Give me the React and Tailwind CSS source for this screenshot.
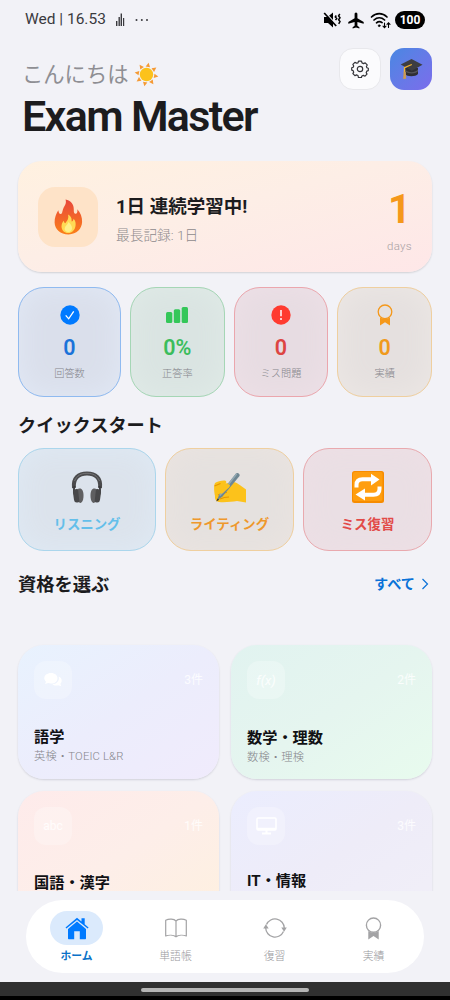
/* ---------- status bar icons ---------- */

function MutedIcon() {
  return (
    <svg width="19" height="18" viewBox="0 0 19 18" fill="none">
      <path d="M1 6h3.5L10 1.5v15L5 12H1z" fill="#000" />
      <path d="M2.200 1.200l12 13.500" stroke="#f2f2f7" strokeWidth="1.300" />
      <path d="M1.2 2l12 13" stroke="#000" strokeWidth="1.7" />
      <path d="M13.300 4.500l-1 1.500 1.400 1.500-1.200 1.500M16.800 3l-1.200 1.900 1.400 1.900-1.400 1.900 1.400 1.900-1.300 2.200" stroke="#000" strokeWidth="1.5" />
    </svg>
  );
}

function PlaneIcon() {
  return (
    <svg width="16" height="17" viewBox="0 0 16 17" fill="#000">
      <path d="M8 .5c.9 0 1.400.8 1.400 1.800v4L15.700 10v1.800L9.400 10v3.800l2 1.400v1.300L8 15.600l-3.400.9v-1.300l2-1.400V10L.3 11.800V10l6.300-3.700v-4C6.600 1.300 7.100.5 8 .5z" />
    </svg>
  );
}

function WifiIcon() {
  return (
    <svg width="21" height="17" viewBox="0 0 21 17" fill="none" stroke="#000" strokeLinecap="round">
      <path d="M1.500 5C6 .6 12.500.6 17 5M4 8c3.200-3 7.400-3 10.600 0M6.500 10.800c1.700-1.500 3.900-1.500 5.600-.2" strokeWidth="1.700" />
      <circle cx="9.200" cy="13.700" r="1" fill="#000" strokeWidth=".5" />
      <path d="M14.500 11v4.500M13 14.200l1.500 1.500 1.500-1.500M18.500 15.500V11M17 12.300l1.500-1.500 1.500 1.500" strokeWidth="1.100" />
    </svg>
  );
}

/* ---------- emoji style drawings ---------- */

function Sun() {
  const rays = [10, 55, 100, 145, 190, 235, 280, 325];
  return (
    <svg width="25" height="25" viewBox="0 0 26 26">
      {rays.map((r) => (
        <path key={r} d="M13 .5l2.300 4.500h-4.600z" fill="#f59a35" transform={`rotate(${r} 13 13)`} />
      ))}
      <circle cx="13" cy="13" r="7" fill="#fcc21b" />
    </svg>
  );
}

function GradCap() {
  return (
    <svg width="23" height="22" viewBox="0 0 23 22">
      <path d="M5.200 10v6c1.500 3 10.500 3 12.800 0v-6z" fill="#2f2f33" />
      <path d="M5.200 11.500c3 3.500 9.500 3.500 12.800 0v1.800c-3 3-9.800 3-12.800 0z" fill="#55555a" />
      <path d="M.7 6.500L11.500 1l11 5.800-10.700 6z" fill="#3d3d41" />
      <path d="M11.800 6.500L4.500 9.700v5" fill="none" stroke="#f5b52d" strokeWidth="1.300" />
      <path d="M3.600 13.800h2.200l.4 7-3 .3z" fill="#c99a55" />
    </svg>
  );
}

function Flame() {
  return (
    <svg width="29" height="36" viewBox="0 0 29 36">
      <defs>
        <linearGradient id="flame" x1="0" y1="0" x2="0" y2="1">
          <stop offset="0" stopColor="#e8473c" />
          <stop offset="1" stopColor="#fb8019" />
        </linearGradient>
      </defs>
      <path d="M11.500.5c5.500 1 8.500 5 8.300 10.300-.1 2.300.3 3.700 1.300 4 1.800.5 2.700-1.800 2.200-4.600 3.200 3.300 5 7.800 4.800 12.800-.3 7-5.500 12.200-13.400 12.400C6.500 35.500.8 30.500.6 23.500.4 18.500 2.400 14.500 4.300 11.300c.4 2.200.9 3.600 2.300 3.700 1.800 0 1.500-2.500 2.700-5.500C10.800 6.300 12.800 4.300 11.500.5z" fill="url(#flame)" />
      <path d="M14 15.500c3.500 2 3.800 4.300 3.600 7 1.200-.3 1.800-1.300 1.900-2.800 2 2 2.500 4.500 2 7.300-.7 4.300-3.500 7-7.200 7-4 0-6.700-2.700-6.800-6.500 0-2.700 1.200-4.500 2.300-5.800.3 1.500.7 2.300 1.500 2.500 1.500-2 3.900-4.500 2.700-8.700z" fill="#ffda55" />
      <path d="M14.500 23c2 2 3.700 4 3.500 6.500-.2 2-1.500 3.500-3.700 3.500s-3.700-1.500-3.600-3.500c.2-2.500 2.800-3.500 3.800-6.500z" fill="#fff08a" />
    </svg>
  );
}

function Headphones() {
  return (
    <svg width="32" height="32" viewBox="0 0 32 32">
      <path d="M3 17C1.800 7 7.500 2.500 16 2.500S30.200 7 29 17" fill="none" stroke="#4b4b4d" strokeWidth="4" />
      <path d="M3.500 10C6 4.500 10 2.300 16 2.300S26 4.500 28.500 10" fill="none" stroke="#747476" strokeWidth="1" />
      <path d="M3.500 15c-1 3-.9 6 .8 10M28.500 15c1 3 .9 6-.8 10" fill="none" stroke="#39393b" strokeWidth="1.800" />
      <rect x="2.500" y="18" width="7" height="13.500" rx="3" fill="#48484a" transform="rotate(-8 6 25)" />
      <rect x="22.500" y="18" width="7" height="13.500" rx="3" fill="#48484a" transform="rotate(8 26 25)" />
      <path d="M7 18c3-1.500 5.500.5 5.500 6.500S10.500 32 8.500 32z" fill="#5f5f61" />
      <path d="M25 18c-3-1.500-5.500.5-5.500 6.500s2 7.500 4 7.500z" fill="#5f5f61" />
    </svg>
  );
}

function WritingHand() {
  return (
    <svg width="34" height="32" viewBox="0 0 34 32">
      <path d="M2 12c2-1.500 6-2.500 9-2.500 2.500 0 3 2 1.500 3l8-1.500c3.500.500 7 3.500 12.500 7.500v13l-9-1.500c-5 .8-12 1.500-18 1-3-.3-4.300-3-4-6-.8-4-1.500-10 0-13z" fill="#fcc21b" />
      <path d="M1.500 15l6-2.500M5 24c3-1.500 6-2.500 9-2.500M7 28c3-1.500 6-2 9-2" fill="none" stroke="#e59600" strokeWidth="1.200" />
      <path d="M4 29.500L6 24 23 2.500c1.500-1.500 4.500.5 3.500 2.500L9.500 25.500z" fill="#6f8792" />
      <path d="M6 24L23 2.500l1.300.8L7.500 25z" fill="#93a9b3" />
      <path d="M3.200 30.500l1.300-3 1.800 1.200z" fill="#333" />
      <path d="M13 13.500c4-1 5 1 3 3l-6 5.500c-2 1.500-4 .5-3-1.500" fill="#fcc21b" />
    </svg>
  );
}

function RepeatTile() {
  return (
    <svg width="32" height="32" viewBox="0 0 32 32">
      <rect width="32" height="32" rx="2.500" fill="#f78c00" />
      <rect x="1" y="1" width="29.500" height="29" rx="2" fill="#ff9e0f" />
      <path d="M4.500 16.500V14c0-4 2.500-5.700 6-5.700h9" fill="none" stroke="#fff" strokeWidth="4" />
      <path d="M27.500 15.500V18c0 4-2.500 5.700-6 5.700h-9" fill="none" stroke="#fff" strokeWidth="4" />
      <path d="M19 2.800l8.500 5.700-8.500 6zM13 17.500v12l-9.500-6z" fill="#fff" />
    </svg>
  );
}

/* ---------- app icons ---------- */

function Gear() {
  return (
    <svg width="18" height="18" viewBox="0 0 18 18" fill="none" stroke="#333338" strokeWidth="1.200" strokeLinejoin="round">
      <path d="M7.500 1.200h3l.5 1.700 1.600.7 1.600-.8 2 2.100-.8 1.600.5 1.200 1.400.5v2.400l-1.500.5-.6 1.500.8 1.500-2 2.100-1.600-.8-1.500.6-.5 1.500h-3L7 15.500l-1.600-.6-1.500.8-2-2.100.8-1.500-.6-1.500-1.400-.5V7.700l1.500-.5.5-1.200-.8-1.600 2-2.100 1.600.8L7 2.900z" />
      <circle cx="9" cy="9" r="2.700" />
    </svg>
  );
}

function CheckBadge() {
  return (
    <svg width="20" height="20" viewBox="0 0 20 20">
      <circle cx="10" cy="10" r="9.700" fill="#007aff" />
      <path d="M5.700 10.300l3 3.500 5-7.500" fill="none" stroke="#fff" strokeWidth="1.300" />
    </svg>
  );
}

function Bars() {
  return (
    <svg width="24" height="20" viewBox="0 0 24 20" fill="#34c759">
      <rect x="1" y="7" width="6.300" height="11" rx="1.500" />
      <rect x="8.800" y="4.200" width="6.400" height="13.800" rx="1.500" />
      <rect x="16.700" y="2" width="6.300" height="16" rx="1.500" />
    </svg>
  );
}

function AlertBadge() {
  return (
    <svg width="20" height="20" viewBox="0 0 20 20">
      <circle cx="10" cy="10" r="9.700" fill="#ff3b30" />
      <path d="M10 5v6.300" stroke="#fff" strokeWidth="1.500" />
      <circle cx="10" cy="14" r="1" fill="#fff" />
    </svg>
  );
}

function Rosette({ className, width = 16, height = 22 }) {
  return (
    <svg className={className} width={width} height={height} viewBox="0 0 16 22" fill="none" stroke="currentColor">
      <circle cx="8" cy="7.800" r="6.800" strokeWidth="1.300" />
      <path d="M3 13.300V21.500l5-3.300 5 3.300v-8.200c-3 2.200-7 2.200-10 0z" fill="currentColor" stroke="none" />
    </svg>
  );
}

function HomeIcon() {
  return (
    <svg width="24" height="23" viewBox="0 0 24 23" fill="#007aff">
      <path d="M.5 10.600L12 .8l4.500 3.800V1.200h3.200v6.100l3.900 3.300-.9 1L12 2.900 1.400 11.600z" />
      <path d="M3 12l9-7.500L21 12v9.300c0 .6-.4 1-1 1h-5.200v-8H9.200v8H4c-.6 0-1-.4-1-1z" />
    </svg>
  );
}

function BookIcon() {
  return (
    <svg width="22" height="20" viewBox="0 0 22 20" fill="none" stroke="#a3a3a5" strokeWidth="1.200" strokeLinejoin="round">
      <path d="M11 3C9 .8 4 .6.700 2.200v15.800c3.300-1.200 8-1 10.300.8 2.300-1.800 7-2 10.300-.8V2.200C18 .6 13 .8 11 3zM11 3v15.800" />
    </svg>
  );
}

function SyncIcon() {
  return (
    <svg width="24" height="22" viewBox="0 0 24 22" fill="none" stroke="#a3a3a5" strokeWidth="1.300">
      <path d="M3.500 7.500A9.300 9.300 0 0 1 21.300 11M20.500 14.500A9.300 9.300 0 0 1 2.700 11" />
      <path d="M18.300 10.500h5.500l-2.700 4.300zM.2 11.500h5.500L2.900 7.200z" fill="#a3a3a5" stroke="none" />
    </svg>
  );
}

function ChatIcon() {
  return (
    <svg width="18" height="15" viewBox="0 0 18 15" fill="#fff">
      <path d="M7 0c4 0 6.500 2.300 6.500 5.300S11 10.600 7 10.600c-1 0-2-.2-2.800-.5L1 11l1-2.300C1 7.800.3 6.600.3 5.300.3 2.300 3 0 7 0z" />
      <path d="M14.700 3.500c1.800.7 3 2 3 4 0 1.300-.5 2.300-1.300 3.200l.8 2.600-3-1c-2.600.6-4.700.1-6-1 4.300-.3 7.500-3 6.500-7.800z" />
    </svg>
  );
}

function MonitorIcon() {
  return (
    <svg width="21" height="18" viewBox="0 0 21 18" fill="none" stroke="#fff">
      <rect x="1" y="1" width="19" height="12" rx="1" strokeWidth="1.500" />
      <path d="M1 11.800h19M10.500 13v3M6 16.500h9" strokeWidth="2" />
    </svg>
  );
}

/* ---------- data ---------- */

const stats = [
  {
    label: "回答数",
    value: "0",
    icon: <CheckBadge />,
    box: "border-[#8fbaf0] bg-[#dadfeb] shadow-[inset_0_0_30px_#e2e9f6]",
    text: "text-[#1a73d9]",
  },
  {
    label: "正答率",
    value: "0%",
    icon: <Bars />,
    box: "border-[#a5d6b5] bg-[#dae4e2] shadow-[inset_0_0_30px_#e0ebe7]",
    text: "text-[#3bbd5c]",
  },
  {
    label: "ミス問題",
    value: "0",
    icon: <AlertBadge />,
    box: "border-[#eba6ad] bg-[#e7dce2] shadow-[inset_0_0_30px_#eee0e7]",
    text: "text-[#dd4542]",
  },
  {
    label: "実績",
    value: "0",
    icon: <Rosette className="text-[#f5981a]" />,
    box: "border-[#efcf9f] bg-[#e5e0df] shadow-[inset_0_0_30px_#ede8e5]",
    text: "text-[#f09a1c]",
  },
];

const quick = [
  {
    label: "リスニング",
    icon: <Headphones />,
    box: "border-[#abd6ec] bg-[#dce3ec] shadow-[inset_0_0_30px_#dfeaf5]",
    text: "text-[#64bfea]",
  },
  {
    label: "ライティング",
    icon: <WritingHand />,
    box: "border-[#efcf9f] bg-[#e5e1df] shadow-[inset_0_0_30px_#ebe4e0]",
    text: "text-[#ee982c]",
  },
  {
    label: "ミス復習",
    icon: <RepeatTile />,
    box: "border-[#e9a9ae] bg-[#eadfe4] shadow-[inset_0_0_30px_#eedfe5]",
    text: "text-[#e24a48]",
  },
];

const categories = [
  {
    title: "語学",
    sub: "英検・TOEIC L&R",
    count: "3件",
    icon: <ChatIcon />,
    bg: "bg-linear-to-br from-[#e8f2fe] via-[#ecedfc] to-[#f0ebfc]",
    pad: "pt-[30px]",
  },
  {
    title: "数学・理数",
    sub: "数検・理検",
    count: "2件",
    icon: <span className="text-[13px] leading-none italic">f(x)</span>,
    bg: "bg-linear-to-br from-[#e1f3f0] via-[#e5f5ef] to-[#e8fbee]",
    pad: "pt-[31px]",
  },
  {
    title: "国語・漢字",
    count: "1件",
    icon: <span className="text-[12px] leading-none">abc</span>,
    bg: "bg-linear-to-br from-[#feebeb] via-[#fdeee9] to-[#fef0df]",
    pad: "pt-[30px]",
  },
  {
    title: "IT・情報",
    count: "3件",
    icon: <MonitorIcon />,
    bg: "bg-linear-to-br from-[#ebedfe] via-[#eeecf8] to-[#f1eff8]",
    pad: "pt-[28px]",
  },
];

const tabs = [
  { label: "ホーム", icon: <HomeIcon />, active: true },
  { label: "単語帳", icon: <BookIcon /> },
  { label: "復習", icon: <SyncIcon /> },
  { label: "実績", icon: <Rosette className="text-[#a3a3a5]" width={17} height={23} /> },
];

/* ---------- sections ---------- */

function StatusBar() {
  return (
    <div className="flex h-[38px] shrink-0 items-center px-[25px] pt-[2px] text-[#3a3a3e]">
      <span className="text-[15.500px] leading-none">Wed | 16.53</span>
      <svg className="ml-[10px]" width="9" height="14" viewBox="0 0 9 14" fill="#3a3a3e">
        <path d="M0 8h1.400v5H0zM2.500 4h1.400v9H2.500zM4.600.5H6V13H4.600zM7 5h1.200v8H7z" />
      </svg>
      <svg className="ml-[10px]" width="14" height="4" viewBox="0 0 14 4" fill="#3a3a3e">
        <circle cx="1.500" cy="2" r="1" />
        <circle cx="6.800" cy="2" r="1" />
        <circle cx="12" cy="2" r="1" />
      </svg>
      <div className="ml-auto flex items-center gap-[6px]">
        <MutedIcon />
        <PlaneIcon />
        <WifiIcon />
        <span className="-ml-[2px] flex h-[18px] w-[30px] items-center justify-center rounded-full bg-black text-[12px] leading-none font-bold text-white">
          100
        </span>
      </div>
    </div>
  );
}

function Header() {
  return (
    <header className="flex h-[123px] shrink-0 justify-between pt-[10px] pr-[18px] pl-[22px]">
      <div>
        <div className="flex h-[52px] items-center gap-[5px]">
          <span className="pt-[2px] text-[21.300px] leading-none text-[#8e8e93]">こんにちは</span>
          <Sun />
        </div>
        <h1 className="-mt-[6px] text-[43px] leading-[44px] font-semibold tracking-[-1.650px] text-[#1c1c1e]">Exam Master</h1>
      </div>
      <div className="flex gap-[9px]">
        <div className="flex size-[42px] items-center justify-center rounded-[14px] border border-[#e8e8ec] bg-[#fbfbfd]">
          <Gear />
        </div>
        <div className="flex size-[42px] items-center justify-center rounded-[14px] bg-linear-to-br from-[#4787e2] to-[#7a6cec]">
          <GradCap />
        </div>
      </div>
    </header>
  );
}

function StreakCard() {
  return (
    <section className="flex h-[111px] shrink-0 items-center rounded-[24px] bg-linear-to-br from-[#fff1e0] via-[#fdeee6] via-45% to-[#fee7e8] pr-[20px] pl-[20px] shadow-[0_1px_2px_rgba(0,0,0,0.14)]">
      <div className="flex size-[60px] items-center justify-center rounded-[17px] bg-[#fee3c8]">
        <Flame />
      </div>
      <div className="ml-[18px] flex flex-col gap-[8px] pt-[6px]">
        <span className="text-[18.500px] leading-[22px] font-bold text-[#1c1c1e]">1日 連続学習中!</span>
        <span className="text-[13.700px] leading-[18px] font-light text-[#8e8a8c]">最長記録: 1日</span>
      </div>
      <div className="ml-auto flex flex-col items-center pt-[9px]">
        <span className="text-[40px] leading-[42px] font-bold text-[#f5981a]">1</span>
        <span className="mt-[8px] text-[11.500px] leading-[14px] font-light tracking-[0.300px] text-[#a8a0a2]">days</span>
      </div>
    </section>
  );
}

function StatGrid() {
  return (
    <section className="mt-[15px] grid h-[110px] shrink-0 grid-cols-[103px_1fr_1fr_1fr] gap-[9px]">
      {stats.map((s) => (
        <div key={s.label} className={`flex flex-col items-center rounded-[26px] border pt-[16px] ${s.box}`}>
          <div className="flex h-[22px] items-center">{s.icon}</div>
          <span className={`mt-[9px] text-[21.500px] leading-[26px] font-semibold ${s.text}`}>{s.value}</span>
          <span className="mt-[5px] text-[10.200px] leading-[16px] font-light text-[#85858b]">{s.label}</span>
        </div>
      ))}
    </section>
  );
}

function QuickStart() {
  return (
    <>
      <h2 className="mt-[15px] h-[28px] shrink-0 text-[18.200px] leading-[28px] font-bold text-[#1c1c1e]">クイックスタート</h2>
      <section className="mt-[8px] grid h-[103px] shrink-0 grid-cols-[138px_1fr_1fr] gap-[9px]">
        {quick.map((q) => (
          <div key={q.label} className={`flex flex-col items-center rounded-[26px] border pt-[22px] ${q.box}`}>
            {q.icon}
            <span className={`mt-[12px] text-[13.400px] leading-[20px] font-bold ${q.text}`}>{q.label}</span>
          </div>
        ))}
      </section>
    </>
  );
}

function Categories() {
  return (
    <>
      <div className="mt-[20px] flex h-[28px] shrink-0 items-center justify-between">
        <h2 className="text-[18.300px] leading-[28px] font-bold text-[#1c1c1e]">資格を選ぶ</h2>
        <div className="flex items-center gap-[6px] pr-[3px] pb-[2px] text-[#0a72d8]">
          <span className="text-[14.200px] leading-[20px] font-bold">すべて</span>
          <svg width="8" height="12" viewBox="0 0 8 12" fill="none" stroke="currentColor" strokeWidth="1.200">
            <path d="M1.500 1l5 5-5 5" />
          </svg>
        </div>
      </div>
      <section className="mt-[46px] grid grid-cols-2 gap-x-[12px] gap-y-[12px]">
        {categories.map((c) => (
          <div key={c.title} className={`h-[134px] rounded-[26px] p-[16px] shadow-[0_1px_2px_rgba(60,60,90,0.18)] ${c.bg}`}>
            <div className="flex items-center justify-between text-white/80">
              <div className="flex size-[38px] items-center justify-center rounded-[12px] bg-white/25">{c.icon}</div>
              <span className="text-[12px] leading-[16px]">{c.count}</span>
            </div>
            <div className={c.pad}>
              <p className="text-[15.200px] leading-[16px] font-bold text-[#111114]">{c.title}</p>
              {c.sub && <p className="mt-[4px] text-[11.300px] leading-[16px] font-light tracking-[0.150px] text-[#86868c]">{c.sub}</p>}
            </div>
          </div>
        ))}
      </section>
    </>
  );
}

function TabBar() {
  return (
    <nav className="mx-[26px] mt-[9px] grid h-[73px] shrink-0 grid-cols-4 rounded-full bg-white px-[1px] pt-[11px]">
      {tabs.map((tab) => (
        <div key={tab.label} className="flex flex-col items-center">
          <div className={`flex h-[34px] w-[53px] items-center justify-center rounded-full ${tab.active ? "bg-[#dbeafc]" : ""}`}>
            {tab.icon}
          </div>
          <span className={`mt-[4px] text-[10.800px] leading-[16px] ${tab.active ? "font-bold text-[#0a72c8]" : "font-light text-[#98989c]"}`}>
            {tab.label}
          </span>
        </div>
      ))}
    </nav>
  );
}

export default function App() {
  return (
    <div lang="ja" className="flex h-[1000px] w-[450px] flex-col overflow-hidden bg-[#f2f2f7] font-[Roboto,'Noto_Sans_CJK_JP',sans-serif]">
      <StatusBar />
      <Header />
      <main className="flex h-[730px] shrink-0 flex-col overflow-hidden px-[18px]">
        <StreakCard />
        <StatGrid />
        <QuickStart />
        <Categories />
      </main>
      <TabBar />
      <div className="mt-[9px] flex h-[14px] shrink-0 justify-center bg-[#303030] pt-[6px]">
        <div className="h-[4px] w-[168px] rounded-full bg-[#b5b5b5]" />
      </div>
      <div className="h-[4px] shrink-0 bg-black" />
    </div>
  );
}
